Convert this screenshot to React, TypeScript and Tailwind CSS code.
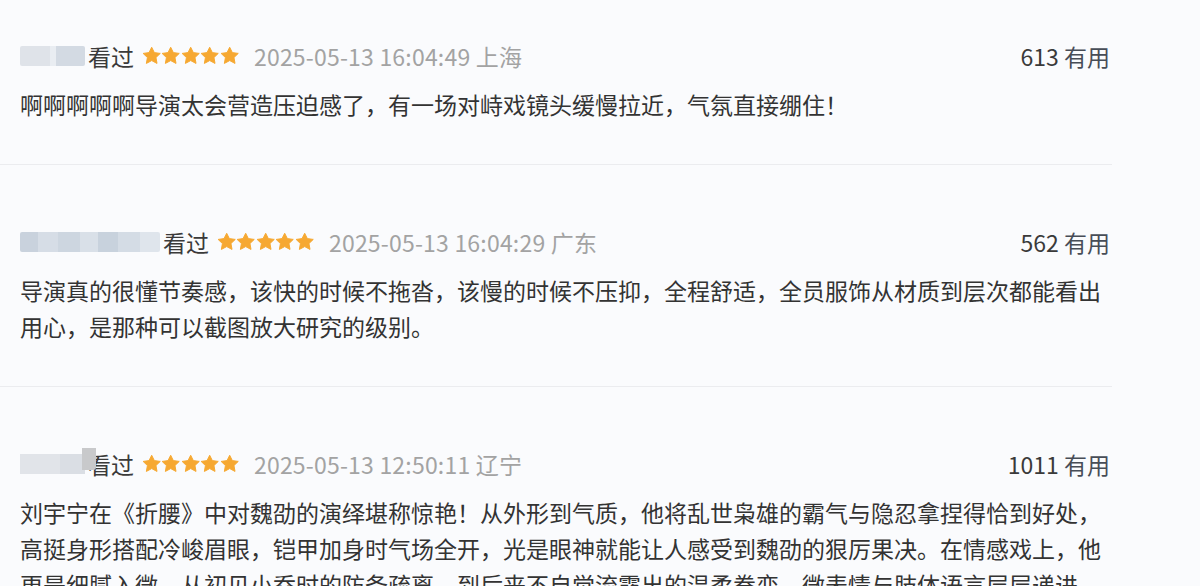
import type { ReactNode } from 'react'

type Review = {
  blur: 'short' | 'long' | 'patch'
  time: string
  useful: string
  lines: string[]
}

const REVIEWS: Review[] = [
  {
    blur: 'short',
    time: '2025-05-13 16:04:49 上海',
    useful: '613',
    lines: ['啊啊啊啊啊导演太会营造压迫感了，有一场对峙戏镜头缓慢拉近，气氛直接绷住！'],
  },
  {
    blur: 'long',
    time: '2025-05-13 16:04:29 广东',
    useful: '562',
    lines: [
      '导演真的很懂节奏感，该快的时候不拖沓，该慢的时候不压抑，全程舒适，全员服饰从材质到层次都能看出',
      '用心，是那种可以截图放大研究的级别。',
    ],
  },
  {
    blur: 'patch',
    time: '2025-05-13 12:50:11 辽宁',
    useful: '1011',
    lines: [
      '刘宇宁在《折腰》中对魏劭的演绎堪称惊艳！从外形到气质，他将乱世枭雄的霸气与隐忍拿捏得恰到好处，',
      '高挺身形搭配冷峻眉眼，铠甲加身时气场全开，光是眼神就能让人感受到魏劭的狠厉果决。在情感戏上，他',
      '更是细腻入微，从初见小乔时的防备疏离，到后来不自觉流露出的温柔眷恋，微表情与肢体语言层层递进，',
    ],
  },
]

function Star() {
  return (
    <svg viewBox="0 0 24 24" className="h-[20px] w-[19.4px]">
      <path
        d="M12 1.2l3.3 6.6 7.3 1-5.3 5.1 1.3 7.3L12 17.7l-6.6 3.5 1.3-7.3-5.3-5.1 7.3-1z"
        fill="#f6a832"
        stroke="#f6a832"
        strokeWidth="1.2"
        strokeLinejoin="round"
      />
    </svg>
  )
}

function BlurName({ kind }: { kind: Review['blur'] }) {
  if (kind === 'long') {
    return (
      <span className="mr-[3px] flex h-[20px] w-[140px] overflow-hidden rounded-[2px]">
        <span className="w-[18px] bg-[#c9d2dd]" />
        <span className="w-[20px] bg-[#d6dde6]" />
        <span className="w-[22px] bg-[#cdd6e0]" />
        <span className="w-[18px] bg-[#d9e0e8]" />
        <span className="w-[20px] bg-[#c8d2dd]" />
        <span className="w-[22px] bg-[#d4dce5]" />
        <span className="w-[20px] bg-[#dfe5ec]" />
      </span>
    )
  }
  if (kind === 'patch') {
    return (
      <span className="relative mr-[3px] flex h-[20px] w-[65px] overflow-visible">
        <span className="w-[40px] bg-[#e1e4e9]" />
        <span className="w-[25px] bg-[#dadee4]" />
        <span className="absolute left-[62px] top-[-6px] z-10 h-[22px] w-[14px] rounded-br-[3px] bg-[#c8c9cb]" />
      </span>
    )
  }
  return (
    <span className="mr-[3px] flex h-[20px] w-[65px] overflow-hidden rounded-[2px]">
      <span className="w-[30px] bg-[#dfe3e9]" />
      <span className="w-[6px] bg-[#e9edf2]" />
      <span className="w-[29px] bg-[#d3dae3]" />
    </span>
  )
}

function Block({ first, children }: { first?: boolean; children: ReactNode }) {
  return (
    <div
      className={`w-[1112px] border-b border-[#ebecef] pb-[42px] pl-[20px] pr-[2px] ${
        first ? 'pt-[38px]' : 'pt-[59px]'
      }`}
    >
      {children}
    </div>
  )
}

export default function App() {
  return (
    <div
      className="h-[586px] w-[1200px] overflow-hidden bg-[#fafbfd] text-[#333333]"
      style={{ fontFamily: '"Noto Sans CJK SC", "Noto Sans", sans-serif' }}
    >
      {REVIEWS.map((review, i) => (
        <Block key={review.time} first={i === 0}>
          <div className="flex h-[36px] items-center justify-between text-[23px]">
            <div className="flex items-center">
              <BlurName kind={review.blur} />
              <span className="relative z-0 text-[#3a3a3a]">看过</span>
              <span className="ml-[8px] flex">
                <Star />
                <Star />
                <Star />
                <Star />
                <Star />
              </span>
              <span className="ml-[15px] tracking-[0.2px] text-[#a3a3a3]">{review.time}</span>
            </div>
            <span className="text-[#3a3a3a]">
              {review.useful} <span className="text-[#474d57]">有用</span>
            </span>
          </div>
          <div className="mt-[12px] text-[23px] leading-[36px]">
            {review.lines.map((line) => (
              <div key={line} className="whitespace-nowrap">
                {line}
              </div>
            ))}
          </div>
        </Block>
      ))}
    </div>
  )
}
